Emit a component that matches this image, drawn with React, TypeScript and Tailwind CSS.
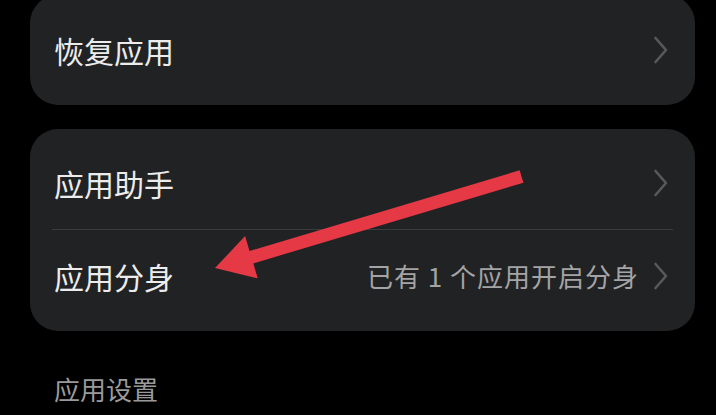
import React from "react";

const Chevron = () => (
  <svg width="16" height="28" viewBox="0 0 16 28" className="shrink-0">
    <path d="M2.5 2 L13 14 L2.5 26" fill="none" stroke="#58595b" strokeWidth="2.6" strokeLinecap="round" strokeLinejoin="round" />
  </svg>
);

export default function App() {
  return (
    <div
      className="relative w-[716px] h-[415px] overflow-hidden bg-black"
      style={{ fontFamily: '"Noto Sans CJK SC", "Noto Sans", sans-serif' }}
    >
      <div className="flex flex-col px-[30px] pr-[21px] -mt-[5px]">
        <div className="h-[110px] rounded-[28px] bg-[#212224] flex items-center pl-[24px] pr-[26px]">
          <span className="flex-1 text-[30px] leading-none text-[#ececec]">恢复应用</span>
          <Chevron />
        </div>

        <div className="mt-[24px] h-[202px] rounded-[28px] bg-[#212224] flex flex-col">
          <div className="h-[100px] pt-[8px] flex items-center pl-[24px] pr-[26px]">
            <span className="flex-1 text-[30px] leading-none text-[#ececec]">应用助手</span>
            <Chevron />
          </div>
          <div className="mx-[22px] h-px bg-[#3a3b3d]" />
          <div className="h-[101px] pb-[10px] flex items-center pl-[24px] pr-[26px]">
            <span className="flex-1 text-[30px] leading-none text-[#ececec]">应用分身</span>
            <span className="text-[26px] leading-none tracking-[1px] text-[#a4a4a6] mr-[14px]">已有 1 个应用开启分身</span>
            <Chevron />
          </div>
        </div>

        <div className="mt-[45px] pl-[24px] text-[26px] leading-none text-[#9a9a9c]">应用设置</div>
      </div>

      <svg className="absolute left-0 top-0 pointer-events-none" width="716" height="415" viewBox="0 0 716 415">
        <polygon
          points="215,268 257.7,278.3 253.3,263.4 523.4,182.7 519.6,170.3 249.5,251 245.1,236.1"
          fill="#e63946"
        />
      </svg>
    </div>
  );
}
